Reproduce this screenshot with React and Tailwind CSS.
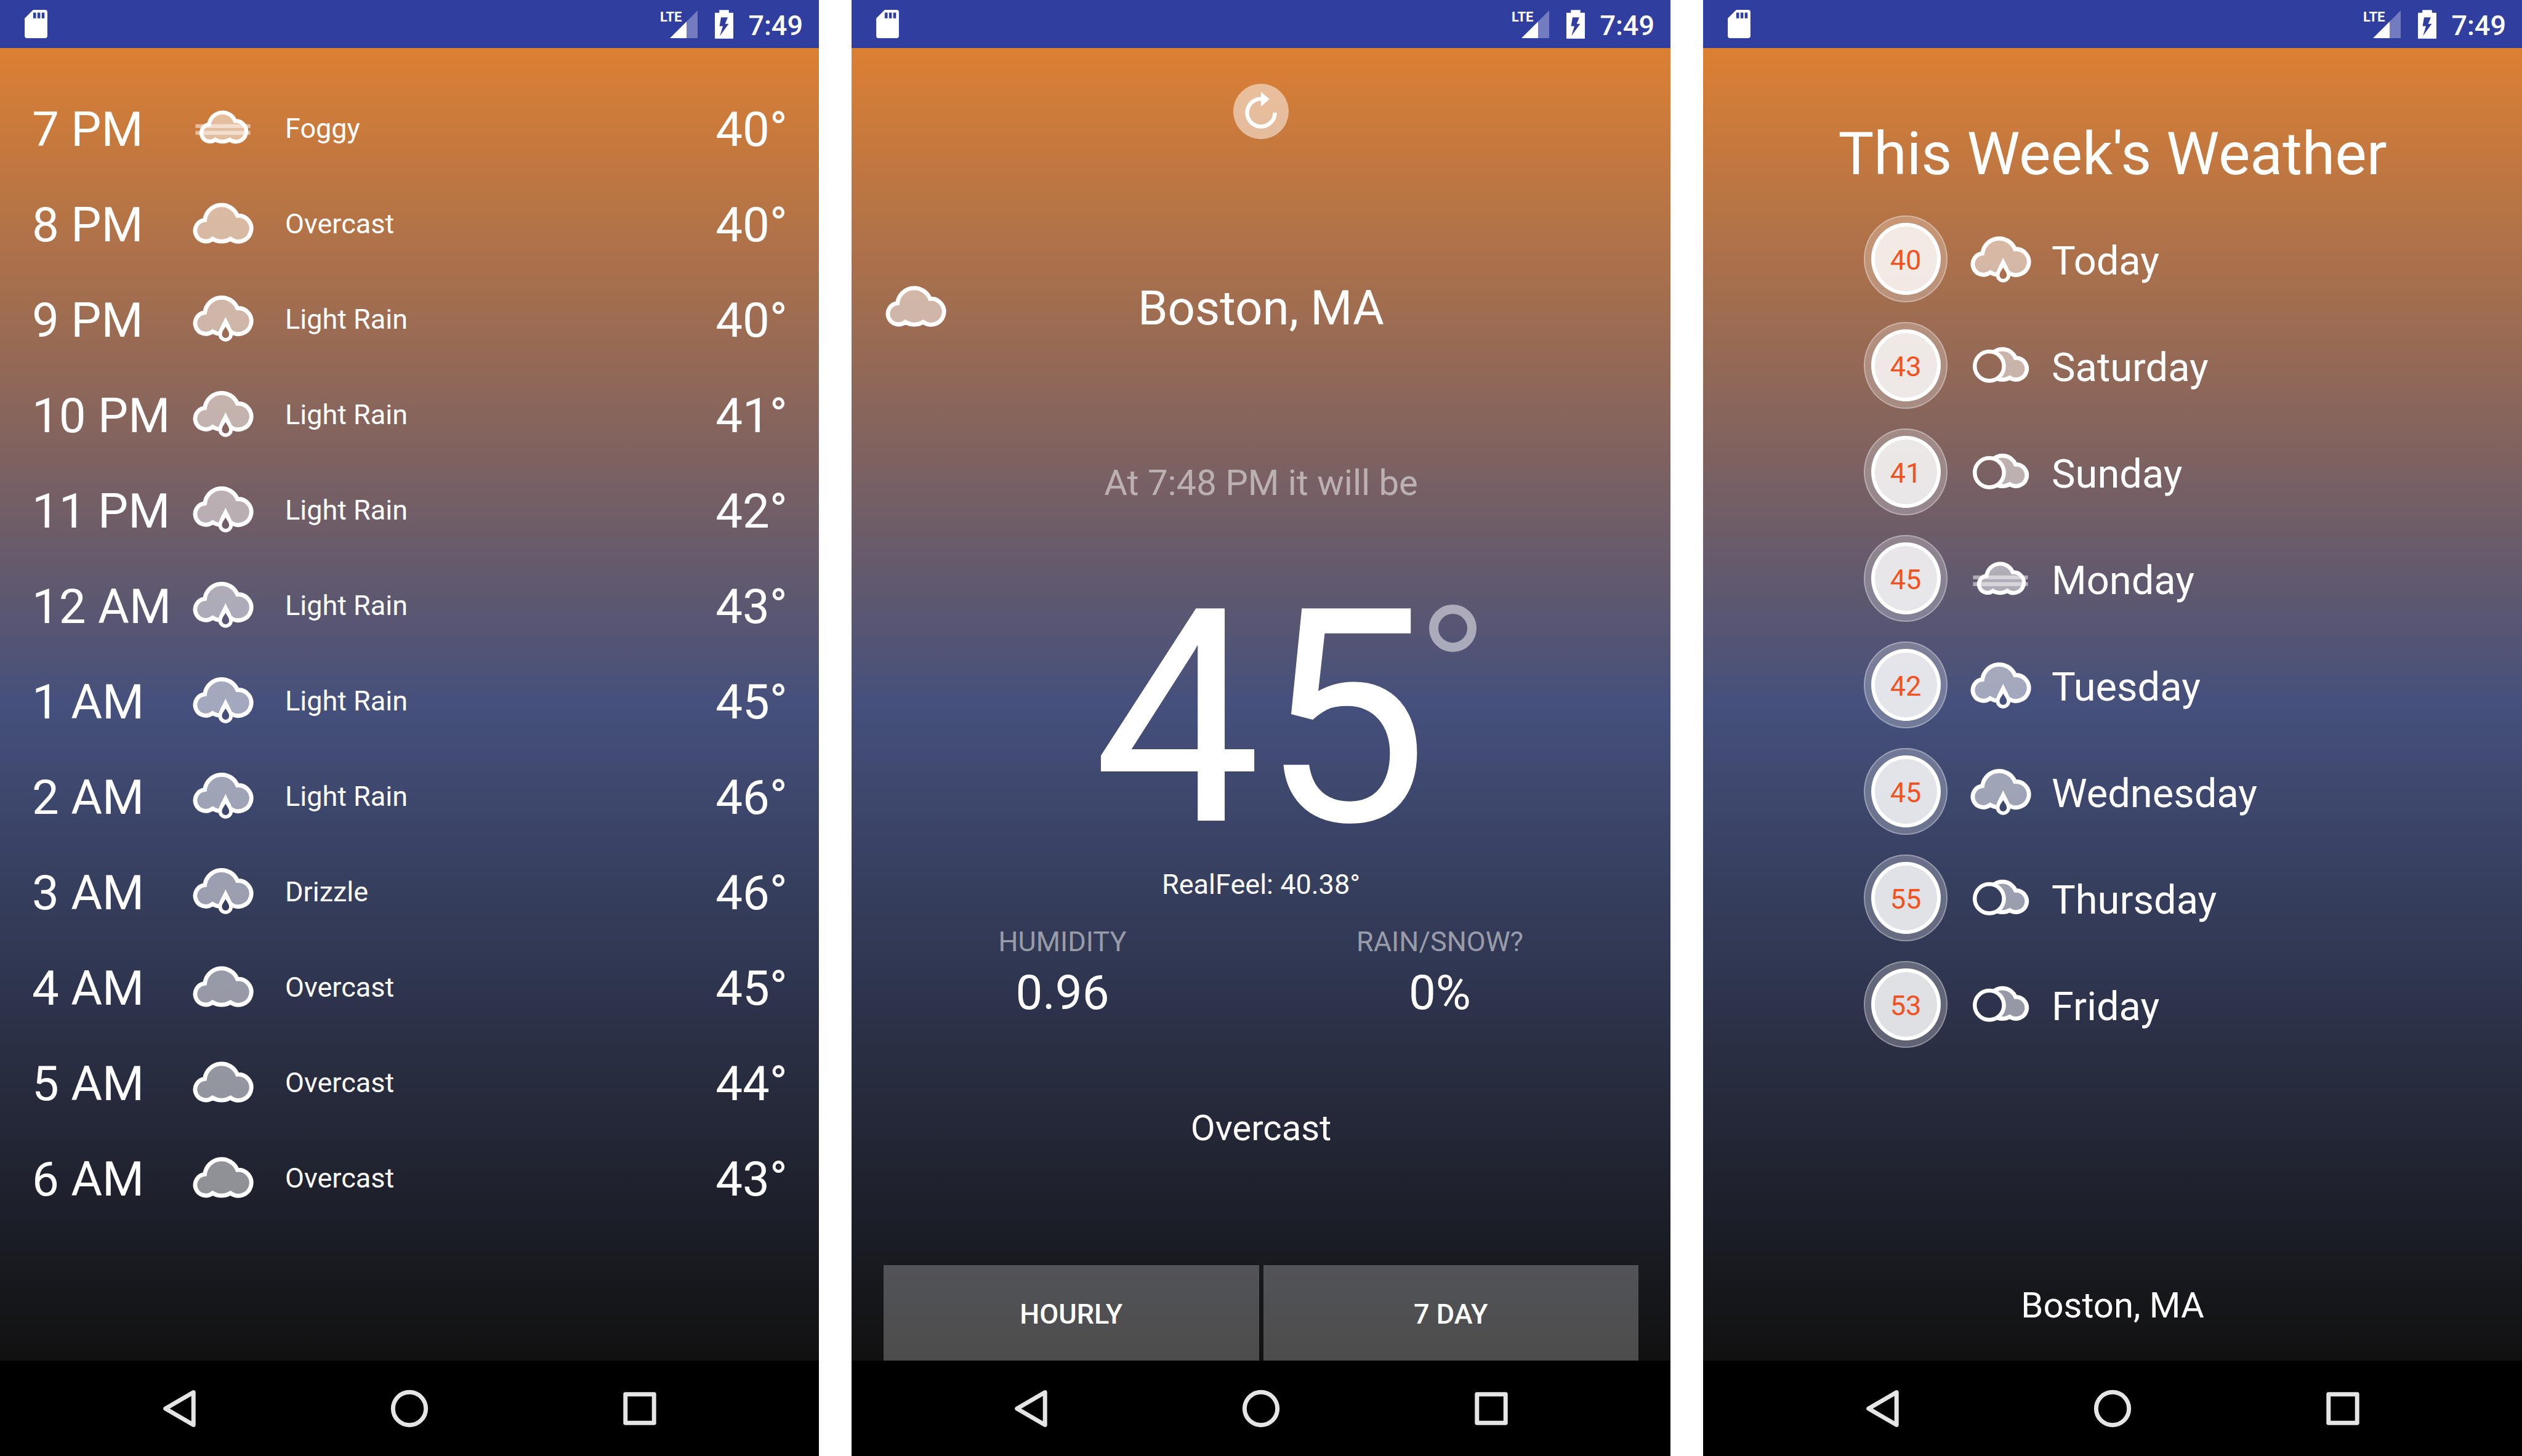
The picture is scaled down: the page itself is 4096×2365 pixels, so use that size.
import { useId } from "react";

const CLOUD =
  "M73 153A89 89 0 0 1 244 130A68 68 0 1 1 208 252A90 90 0 0 1 114 252A56 56 0 1 1 73 153Z";

function Overcast() {
  return (
    <path d={CLOUD} fill="#fff" fillOpacity="0.5" stroke="#fff" strokeWidth="22" />
  );
}

function Foggy() {
  return (
    <>
      <rect x="24" y="151" width="288" height="20" fill="#fff" fillOpacity="0.5" />
      <rect x="24" y="186" width="288" height="21" fill="#fff" fillOpacity="0.5" />
      <path
        d={CLOUD}
        transform="translate(37 30) scale(0.8)"
        fill="#fff"
        fillOpacity="0.5"
        stroke="#fff"
        strokeWidth="26"
      />
    </>
  );
}

const DROP_HOLE = "M182 212C188 224 201 238 201 252A19 19 0 1 1 163 252C163 238 176 224 182 212Z";

function Rain() {
  const id = useId();
  return (
    <>
      <mask id={id} maskUnits="userSpaceOnUse" x="0" y="0" width="336" height="336">
        <rect width="336" height="336" fill="#fff" />
        <path d={DROP_HOLE} fill="#000" />
      </mask>
      <g mask={`url(#${id})`}>
        <path
          d={CLOUD}
          transform="translate(0 -15)"
          fill="#fff"
          fillOpacity="0.5"
          stroke="#fff"
          strokeWidth="22"
        />
        <path
          d="M182 160C190 182 220 226 220 252A38 38 0 1 1 144 252C144 226 174 182 182 160Z"
          fill="#fff"
        />
      </g>
    </>
  );
}

function PartlyCloudy() {
  const id = useId();
  return (
    <>
      <mask id={id} maskUnits="userSpaceOnUse" x="0" y="0" width="336" height="336">
        <rect width="336" height="336" fill="#fff" />
        <circle cx="109.5" cy="170.5" r="77" fill="#000" />
      </mask>
      <path
        d="M120 109A75 75 0 0 1 247 127A57 57 0 1 1 217 231A80 80 0 0 1 120 216Z"
        mask={`url(#${id})`}
        fill="#fff"
        fillOpacity="0.5"
        stroke="#fff"
        strokeWidth="22"
      />
      <circle cx="109.5" cy="170.5" r="76.5" fill="none" stroke="#fff" strokeWidth="21" />
    </>
  );
}

const GLYPHS = { overcast: Overcast, foggy: Foggy, rain: Rain, partly: PartlyCloudy };

function WeatherIcon({ kind, className = "" }) {
  const Glyph = GLYPHS[kind];
  return (
    <svg viewBox="0 0 336 336" aria-hidden="true" className={`size-[104px] shrink-0 ${className}`}>
      <Glyph />
    </svg>
  );
}

function StatusBar() {
  return (
    <header className="flex h-[78px] shrink-0 items-center bg-[#303f9f] pr-[26px] pl-10 text-white">
      <svg viewBox="0 0 40 50" aria-hidden="true" className="h-[46px] w-[37px]">
        <path
          fillRule="evenodd"
          fill="#fff"
          d="M15 0H36A4 4 0 0 1 40 4V46A4 4 0 0 1 36 50H4A4 4 0 0 1 0 46V15ZM15 5V15H20V5ZM22.500 5V15H27.500V5ZM30 5V15H35V5Z"
        />
      </svg>
      <div className="relative ml-auto">
        <svg viewBox="0 0 49 49" aria-hidden="true" className="size-[45px]">
          <path d="M49 0V49H29.500V19.500Z" fill="#fff" fillOpacity="0.32" />
          <path d="M29.500 19.500V49H0Z" fill="#fff" />
        </svg>
        <span className="absolute -top-px right-[26px] text-[22px] leading-[24px] font-bold [font-family:'Liberation_Sans_Narrow',Roboto,sans-serif]">
          LTE
        </span>
      </div>
      <svg viewBox="0 0 33 51" aria-hidden="true" className="ml-7 h-[47px] w-[30px]">
        <path
          fillRule="evenodd"
          fill="#fff"
          d="M8 0H25V5H33V51H0V5H8ZM11 13L8.300 28.700H14.300L9 46L24.700 24.700H18.300L23 13Z"
        />
      </svg>
      <time className="ml-6 pt-1 text-[45px] leading-[53px] font-medium">7:49</time>
    </header>
  );
}

function NavBar() {
  const shape = { fill: "none", stroke: "#e5e5e5", strokeWidth: 7.5, strokeLinejoin: "round" };
  const keys = [
    ["Back", <path d="M18 42L67 13.500V70.500Z" {...shape} />],
    ["Home", <circle cx="42" cy="42" r="28.700" {...shape} />],
    ["Recent apps", <rect x="17" y="17" width="50" height="50" {...shape} />],
  ];
  return (
    <nav className="grid h-[155px] shrink-0 grid-cols-3 bg-black px-[104px]">
      {keys.map(([label, icon]) => (
        <button key={label} type="button" aria-label={label} className="flex items-center justify-center">
          <svg viewBox="0 0 84 84" aria-hidden="true" className="size-[78px]">
            {icon}
          </svg>
        </button>
      ))}
    </nav>
  );
}

function Phone({ label, children }) {
  return (
    <section aria-label={label} className="flex min-h-screen flex-col">
      <StatusBar />
      <div className="flex flex-1 flex-col bg-[linear-gradient(to_bottom,#dc8033,#45507c_50%,#111111)] text-white">
        {children}
      </div>
      <NavBar />
    </section>
  );
}

const HOURS = [
  ["7 PM", "foggy", "Foggy", 40],
  ["8 PM", "overcast", "Overcast", 40],
  ["9 PM", "rain", "Light Rain", 40],
  ["10 PM", "rain", "Light Rain", 41],
  ["11 PM", "rain", "Light Rain", 42],
  ["12 AM", "rain", "Light Rain", 43],
  ["1 AM", "rain", "Light Rain", 45],
  ["2 AM", "rain", "Light Rain", 46],
  ["3 AM", "rain", "Drizzle", 46],
  ["4 AM", "overcast", "Overcast", 45],
  ["5 AM", "overcast", "Overcast", 44],
  ["6 AM", "overcast", "Overcast", 43],
];

function Hourly() {
  return (
    <ul className="pt-[55px] pr-[51px] pl-[52px]">
      {HOURS.map(([time, kind, summary, temp]) => (
        <li key={time} className="flex h-[155px] items-center">
          <span className="w-[258px] shrink-0 text-[78px] leading-[92px]">{time}</span>
          <WeatherIcon kind={kind} className="mb-2" />
          <span className="ml-[49px] pb-1 text-[45px] leading-[53px]">{summary}</span>
          <span className="ml-auto text-[78px] leading-[92px]">{temp}°</span>
        </li>
      ))}
    </ul>
  );
}

function Stat({ label, value }) {
  return (
    <div className="flex flex-col items-center gap-[11px]">
      <dt className="text-[45px] leading-[53px] text-white/50">{label}</dt>
      <dd className="text-[78px] leading-[92px]">{value}</dd>
    </div>
  );
}

function Current() {
  return (
    <>
      <button type="button" aria-label="Refresh" className="mt-[58px] self-center">
        <svg viewBox="204 141 294 294" aria-hidden="true" className="size-[90px]">
          <circle cx="351" cy="288" r="147" fill="#fff" fillOpacity="0.5" />
          <path d="M351 221.500A73.500 73.500 0 1 0 424.500 294" fill="none" stroke="#fff" strokeWidth="21" />
          <path d="M351 184L396 223L351 262Z" fill="#fff" />
        </svg>
      </button>
      <div className="mt-[219px] grid grid-cols-[104px_1fr_104px] items-center px-[52px]">
        <WeatherIcon kind="overcast" className="mb-2" />
        <h1 className="text-center text-[78px] leading-[92px]">Boston, MA</h1>
      </div>
      <p className="mt-[193px] text-center text-[58px] leading-[68px] text-white/50">
        At 7:48 PM it will be
      </p>
      <div className="relative mt-[107px] self-center">
        <p className="text-[485px] leading-none">45</p>
        <span className="absolute top-[57px] left-full size-[77px] rounded-full border-[15px] border-white/50" />
      </div>
      <p className="text-center text-[45px] leading-[53px]">RealFeel: 40.38°</p>
      <dl className="mt-10 grid grid-cols-2 pr-[68px] pl-9">
        <Stat label="HUMIDITY" value="0.96" />
        <Stat label="RAIN/SNOW?" value="0%" />
      </dl>
      <p className="mt-[139px] text-center text-[58px] leading-[68px]">Overcast</p>
      <div className="mt-auto grid grid-cols-2 gap-[7px] px-[52px]">
        {["HOURLY", "7 DAY"].map((label) => (
          <button
            key={label}
            type="button"
            className="h-[155px] bg-white/25 pt-1 text-[45px] leading-[53px] font-medium"
          >
            {label}
          </button>
        ))}
      </div>
    </>
  );
}

const DAYS = [
  [40, "rain", "Today"],
  [43, "partly", "Saturday"],
  [41, "partly", "Sunday"],
  [45, "foggy", "Monday"],
  [42, "rain", "Tuesday"],
  [45, "rain", "Wednesday"],
  [55, "partly", "Thursday"],
  [53, "partly", "Friday"],
];

function Week() {
  return (
    <>
      <h2 className="mt-[115px] text-center text-[97px] leading-[114px]">This Week's Weather</h2>
      <ul className="mt-[43px] flex flex-col gap-8 pl-[261px]">
        {DAYS.map(([temp, kind, day]) => (
          <li key={day} className="flex items-center">
            <span className="mr-[34px] flex h-[141px] w-[136px] shrink-0 items-center justify-center rounded-[50%] border-2 border-white/30 bg-white/25">
              <span className="flex h-[117px] w-[113px] items-center justify-center rounded-[50%] border-6 border-white bg-white/80 pt-1 text-[45px] leading-[53px] text-[#f4511e]">
                {temp}
              </span>
            </span>
            <WeatherIcon kind={kind} />
            <span className="ml-[31px] pt-1.5 text-[65px] leading-[76px]">{day}</span>
          </li>
        ))}
      </ul>
      <p className="mt-auto mb-14 text-center text-[58px] leading-[68px]">Boston, MA</p>
    </>
  );
}

export default function App() {
  return (
    <main className="grid min-h-screen grid-cols-3 gap-[53px] bg-white font-[Roboto,sans-serif]">
      <Phone label="Hourly forecast">
        <Hourly />
      </Phone>
      <Phone label="Current weather">
        <Current />
      </Phone>
      <Phone label="Weekly forecast">
        <Week />
      </Phone>
    </main>
  );
}
